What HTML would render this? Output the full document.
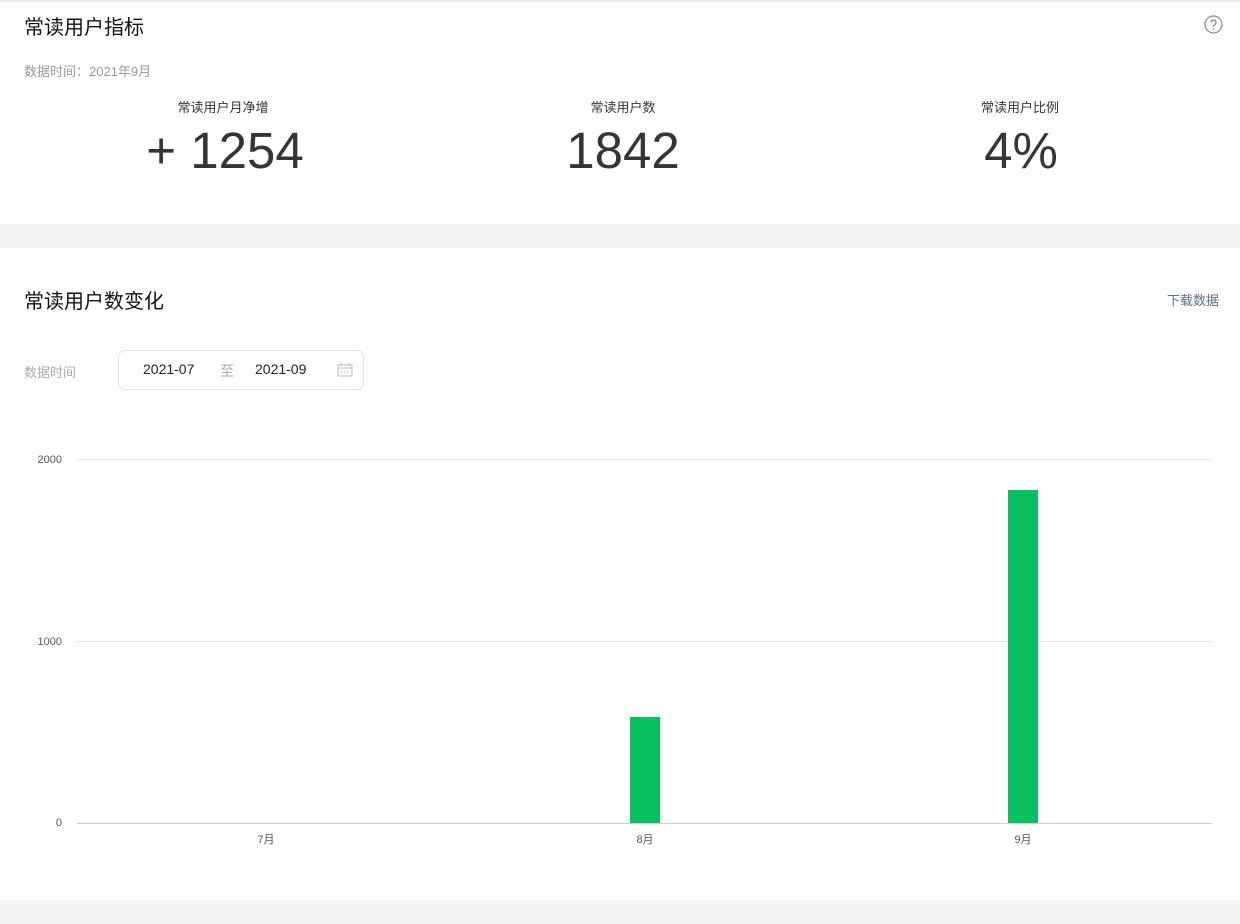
<!DOCTYPE html>
<html><head><meta charset="utf-8"><style>
*{margin:0;padding:0;box-sizing:border-box}
body{width:1240px;height:924px;background:#fff;font-family:"Liberation Sans","Noto Sans CJK SC",sans-serif;position:relative;overflow:hidden;color:#353535}
.a{position:absolute;white-space:nowrap}
</style></head><body>
<div class="a" style="left:0;top:0;width:1240px;height:2px;background:#ececec"></div>
<div class="a" style="left:24px;top:11px;font-size:20px;color:#111">常读用户指标</div>
<svg class="a" style="left:1204px;top:15px" width="19" height="19" viewBox="0 0 19 19"><circle cx="9.5" cy="9.5" r="8.5" fill="none" stroke="#888" stroke-width="1.2"/><path d="M7 7.5a2.5 2.5 0 1 1 3.5 2.3c-.7.4-1 .8-1 1.6v.6" fill="none" stroke="#888" stroke-width="1.2"/><circle cx="9.5" cy="14" r=".8" fill="#888"/></svg>
<div class="a" style="left:24px;top:61px;font-size:13px;color:#999">数据时间：2021年9月</div>
<div class="a" style="left:123px;width:200px;text-align:center;top:97px;font-size:13px">常读用户月净增</div>
<div class="a" style="left:523px;width:200px;text-align:center;top:97px;font-size:13px">常读用户数</div>
<div class="a" style="left:920px;width:200px;text-align:center;top:97px;font-size:13px">常读用户比例</div>
<div class="a" style="left:75px;width:300px;text-align:center;top:120px;font-size:51px;line-height:62px">+ 1254</div>
<div class="a" style="left:473px;width:300px;text-align:center;top:120px;font-size:51px;line-height:62px">1842</div>
<div class="a" style="left:871px;width:300px;text-align:center;top:120px;font-size:51px;line-height:62px">4%</div>
<div class="a" style="left:0;top:224px;width:1240px;height:24px;background:#f4f5f7"></div>
<div class="a" style="left:24px;top:285px;font-size:20px;color:#111">常读用户数变化</div>
<div class="a" style="left:1167px;top:290px;font-size:13px;color:#576b95">下载数据</div>
<div class="a" style="left:24px;top:362px;font-size:13px;color:#aaa">数据时间</div>
<div class="a" style="left:118px;top:350px;width:246px;height:40px;border:1px solid #e2e2e2;border-radius:7px"></div>
<div class="a" style="left:143px;top:361px;font-size:14px;color:#222">2021-07</div>
<div class="a" style="left:220px;top:361px;font-size:14px;color:#aaa">至</div>
<div class="a" style="left:255px;top:361px;font-size:14px;color:#222">2021-09</div>
<svg class="a" style="left:337px;top:363px" width="16" height="14" viewBox="0 0 16 14"><rect x="1" y="2" width="14" height="11" fill="none" stroke="#bbb"/><path d="M1 5h14M4 0v3M12 0v3" stroke="#bbb"/><path d="M4 8h1M7 8h1M10 8h1M4 10h1M7 10h1M10 10h1" stroke="#bbb"/></svg>
<div class="a" style="left:77px;top:459px;width:1135px;height:1px;background:#e6e6e6"></div>
<div class="a" style="left:77px;top:641px;width:1135px;height:1px;background:#e6e6e6"></div>
<div class="a" style="left:77px;top:823px;width:1135px;height:1px;background:#ccc"></div>
<div class="a" style="left:20px;width:42px;text-align:right;top:454px;font-size:11px;color:#555">2000</div>
<div class="a" style="left:20px;width:42px;text-align:right;top:636px;font-size:11px;color:#555">1000</div>
<div class="a" style="left:20px;width:42px;text-align:right;top:817px;font-size:11px;color:#555">0</div>
<div class="a" style="left:630px;top:717px;width:30px;height:106px;background:#07c160"></div>
<div class="a" style="left:1008px;top:490px;width:30px;height:333px;background:#07c160"></div>
<div class="a" style="left:246px;width:40px;text-align:center;top:831px;font-size:11px;color:#555">7月</div>
<div class="a" style="left:625px;width:40px;text-align:center;top:831px;font-size:11px;color:#555">8月</div>
<div class="a" style="left:1003px;width:40px;text-align:center;top:831px;font-size:11px;color:#555">9月</div>
<div class="a" style="left:0;top:900px;width:1240px;height:24px;background:#f4f5f7"></div>
</body></html>
